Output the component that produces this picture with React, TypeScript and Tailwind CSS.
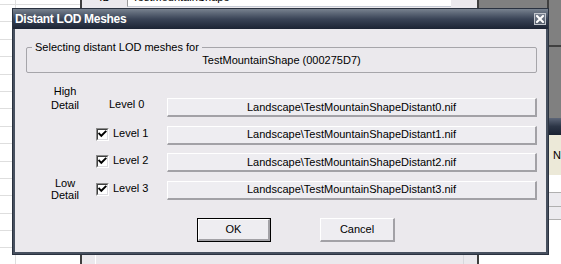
import React from "react";

const FONT = { fontFamily: '"Liberation Sans", Arial, sans-serif' };

function Check() {
  return (
    <div className="w-[13px] h-[13px] border border-t-[#8c8c8c] border-l-[#8c8c8c] border-b-white border-r-white shrink-0">
      <div className="w-full h-full border border-t-[#404040] border-l-[#404040] border-b-[#dcdbe0] border-r-[#dcdbe0] bg-white flex items-center justify-center">
        <svg width="9" height="9" viewBox="0 0 9 9">
          <polyline points="1.2,3.6 3.3,5.8 7.6,1.6" fill="none" stroke="#000" strokeWidth="1.9" strokeLinecap="square" />
        </svg>
      </div>
    </div>
  );
}

function Btn({ children, className = "" }: { children: React.ReactNode; className?: string }) {
  return (
    <div
      className={
        "flex items-center justify-center bg-[#eeedf1] border-t border-l border-t-white border-l-white border-b-2 border-r-2 border-b-[#a2a1a6] border-r-[#a2a1a6] leading-[13px] " +
        className
      }
    >
      {children}
    </div>
  );
}

const rows = [
  { label: ["High", "Detail"], kind: "top", level: "Level 0", cb: false, file: "Landscape\\TestMountainShapeDistant0.nif" },
  { label: null, kind: "", level: "Level 1", cb: true, file: "Landscape\\TestMountainShapeDistant1.nif" },
  { label: null, kind: "", level: "Level 2", cb: true, file: "Landscape\\TestMountainShapeDistant2.nif" },
  { label: ["Low", "Detail"], kind: "mid", level: "Level 3", cb: true, file: "Landscape\\TestMountainShapeDistant3.nif" },
];

const leftRows = [5, 17.4, 17.4, 17.4, 17.4, 17.4, 17.4, 17.4, 17.4, 17.4, 17.4, 17.4, 17.4, 17.4, 17.4, 17.4];

export default function App() {
  return (
    <div className="relative w-[561px] h-[264px] overflow-hidden flex text-[11px] text-black" style={FONT}>
      {/* left spreadsheet panel */}
      <div className="w-[81px] bg-white flex flex-col">
        {leftRows.map((h, i) => (
          <div key={i} className="flex border-b border-[#dedede] shrink-0" style={{ height: h }}>
            <div className="w-[16px] border-r border-[#dedede]" />
            <div className="flex-1" />
          </div>
        ))}
      </div>
      <div className="w-[2px] bg-[#3f3f3f]" />
      {/* middle panel */}
      <div className="w-[398px] bg-[#ebe9ed] flex flex-col">
        <div className="-mt-[12px] h-[19px] flex shrink-0">
          <div className="w-[45px] flex items-center justify-center leading-[13px]">ID</div>
          <div className="w-[324px] bg-white border-l border-b border-l-[#9a9a9a] border-b-[#c7ccd6] flex items-center pl-[4px] leading-[13px]">
            TestMountainShape
          </div>
          <div className="flex-1" />
        </div>
        <div className="flex-1" />
        <div className="h-[10px] flex shrink-0">
          <div className="w-[14px] border-r border-white" />
          <div className="w-[368px] border-r border-[#d8d8dc]" />
          <div className="flex-1" />
        </div>
      </div>
      <div className="w-[2px] bg-[#3f3f3f]" />
      {/* right panel */}
      <div className="flex-1 flex flex-col">
        <div className="h-[47px] flex shrink-0 bg-[#808080]">
          <div className="w-[68px]" />
          <div className="flex-1 border-l-2 border-b-2 border-[#404040]" />
        </div>
        <div className="h-[71px] bg-[#808080] shrink-0" />
        <div className="h-[17px] bg-gradient-to-b from-[#5d6678] via-[#2c3546] to-[#1a2232] shrink-0" />
        <div className="h-[40px] bg-[#ece9d8] pl-[74px] pt-[14px] leading-[13px] shrink-0">N</div>
        <div className="h-[18px] bg-white border-b border-[#b0b0b0] shrink-0" />
        <div className="h-[14px] bg-[#ecebef] border-b border-[#b0b0b0] shrink-0" />
        <div className="h-[13px] bg-[#ecebef] border-b border-[#b0b0b0] shrink-0" />
        <div className="flex-1 bg-white" />
      </div>

      {/* dialog window */}
      <div className="absolute left-[12px] top-[8px] w-[537px] h-[247px] flex flex-col bg-[#47505f] border border-[#2a3240]">
        <div className="h-[20px] shrink-0 flex items-center justify-between pl-[2px] pr-[2px] bg-gradient-to-b from-[#78828f] via-[#3a4457] to-[#1c2434]">
          <span className="text-white font-bold text-[12px] tracking-[-0.3px] leading-[14px]">Distant LOD Meshes</span>
          <div className="w-[12px] h-[12px] border border-[#c2c6cd] bg-gradient-to-b from-[#7a8290] to-[#555e6d] flex items-center justify-center">
            <svg width="8" height="8" viewBox="0 0 8 8">
              <path d="M1 1 L7 7 M7 1 L1 7" stroke="#fff" strokeWidth="2" strokeLinecap="square" />
            </svg>
          </div>
        </div>
        <div className="flex-1 mx-[2px] mb-[2px] bg-[#ebe9ed] flex flex-col">
          <fieldset className="ml-[11px] mr-[9px] mt-[12px] border border-[#a6a5aa] rounded-[2px] pb-[5px]">
            <legend className="ml-[5px] px-[3px] leading-[13px]">Selecting distant LOD meshes for</legend>
            <div className="text-center leading-[13px]">TestMountainShape (000275D7)</div>
          </fieldset>

          <div className="mt-[25px] flex flex-col gap-[8.5px]">
            {rows.map((r, i) => (
              <div key={i} className="flex items-start h-[19px]">
                <div className="ml-[25px] w-[50px] text-center">
                  {r.kind === "top" && (
                    <div className="h-[14px] flex flex-col justify-end leading-[14px]">
                      <div>{r.label![0]}</div>
                      <div>{r.label![1]}</div>
                    </div>
                  )}
                  {r.kind === "mid" && (
                    <div className="-mt-[3.5px] leading-[12px]">
                      <div>{r.label![0]}</div>
                      <div>{r.label![1]}</div>
                    </div>
                  )}
                </div>
                <div className="ml-[6px] w-[71px] h-[19px]">
                  {r.cb ? (
                    <div className="flex items-start">
                      <div className="mt-[2px]">
                        <Check />
                      </div>
                      <span className="ml-[4px] pt-[1px] leading-[13px]">{r.level}</span>
                    </div>
                  ) : (
                    <span className="block pl-[13px] leading-[13px]">{r.level}</span>
                  )}
                </div>
                <Btn className="flex-1 mr-[9px] h-[19px]">{r.file}</Btn>
              </div>
            ))}
          </div>

          <div className="mt-[18px] flex">
            <div className="ml-[182px] w-[74px] h-[24px] border border-black">
              <Btn className="w-full h-full">OK</Btn>
            </div>
            <Btn className="ml-[49px] w-[75px] h-[24px]">Cancel</Btn>
          </div>
        </div>
      </div>
    </div>
  );
}
